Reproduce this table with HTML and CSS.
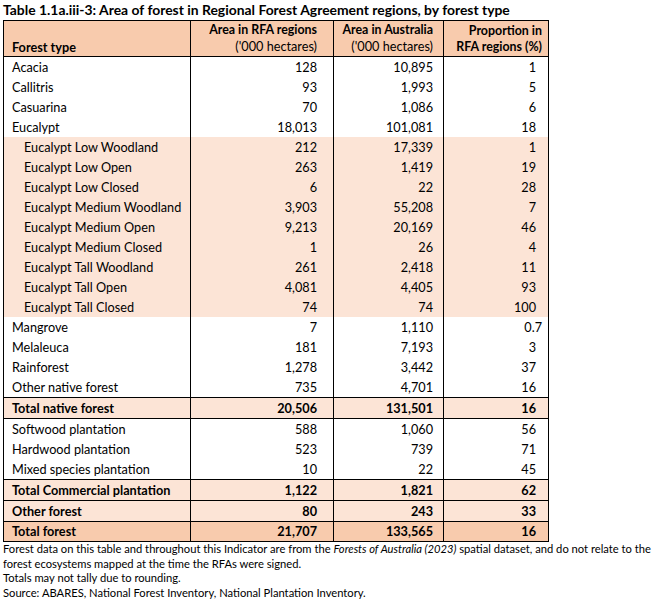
FILE: index.html
```html
<!DOCTYPE html>
<html>
<head>
<meta charset="utf-8">
<link rel="stylesheet" href="styles.css">
</head>
<body>
<div class="page">
  <div class="title">Table 1.1a.iii-3: Area of forest in Regional Forest Agreement regions, by forest type</div>
  <table class="tbl">
    <colgroup>
      <col class="c1"><col class="c2"><col class="c3"><col class="c4">
    </colgroup>
    <thead>
      <tr>
        <th class="name">Forest type</th>
        <th class="n2">Area in RFA regions<br><span class="thin">('000 hectares)</span></th>
        <th class="n3">Area in Australia<br><span class="thin">('000 hectares)</span></th>
        <th class="n4">Proportion in<br>RFA regions (%)</th>
      </tr>
    </thead>
    <tbody>
      <tr><td class="name">Acacia</td><td class="n2">128</td><td class="n3">10,895</td><td class="n4">1</td></tr>
      <tr><td class="name">Callitris</td><td class="n2">93</td><td class="n3">1,993</td><td class="n4">5</td></tr>
      <tr><td class="name">Casuarina</td><td class="n2">70</td><td class="n3">1,086</td><td class="n4">6</td></tr>
      <tr><td class="name">Eucalypt</td><td class="n2">18,013</td><td class="n3">101,081</td><td class="n4">18</td></tr>
      <tr class="sub"><td class="name">Eucalypt Low Woodland</td><td class="n2">212</td><td class="n3">17,339</td><td class="n4">1</td></tr>
      <tr class="sub"><td class="name">Eucalypt Low Open</td><td class="n2">263</td><td class="n3">1,419</td><td class="n4">19</td></tr>
      <tr class="sub"><td class="name">Eucalypt Low Closed</td><td class="n2">6</td><td class="n3">22</td><td class="n4">28</td></tr>
      <tr class="sub"><td class="name">Eucalypt Medium Woodland</td><td class="n2">3,903</td><td class="n3">55,208</td><td class="n4">7</td></tr>
      <tr class="sub"><td class="name">Eucalypt Medium Open</td><td class="n2">9,213</td><td class="n3">20,169</td><td class="n4">46</td></tr>
      <tr class="sub"><td class="name">Eucalypt Medium Closed</td><td class="n2">1</td><td class="n3">26</td><td class="n4">4</td></tr>
      <tr class="sub"><td class="name">Eucalypt Tall Woodland</td><td class="n2">261</td><td class="n3">2,418</td><td class="n4">11</td></tr>
      <tr class="sub"><td class="name">Eucalypt Tall Open</td><td class="n2">4,081</td><td class="n3">4,405</td><td class="n4">93</td></tr>
      <tr class="sub"><td class="name">Eucalypt Tall Closed</td><td class="n2">74</td><td class="n3">74</td><td class="n4">100</td></tr>
      <tr><td class="name">Mangrove</td><td class="n2">7</td><td class="n3">1,110</td><td class="n4 dec">0.7</td></tr>
      <tr><td class="name">Melaleuca</td><td class="n2">181</td><td class="n3">7,193</td><td class="n4">3</td></tr>
      <tr><td class="name">Rainforest</td><td class="n2">1,278</td><td class="n3">3,442</td><td class="n4">37</td></tr>
      <tr><td class="name">Other native forest</td><td class="n2">735</td><td class="n3">4,701</td><td class="n4">16</td></tr>
      <tr class="total"><td class="name">Total native forest</td><td class="n2">20,506</td><td class="n3">131,501</td><td class="n4">16</td></tr>
      <tr><td class="name">Softwood plantation</td><td class="n2">588</td><td class="n3">1,060</td><td class="n4">56</td></tr>
      <tr><td class="name">Hardwood plantation</td><td class="n2">523</td><td class="n3">739</td><td class="n4">71</td></tr>
      <tr><td class="name">Mixed species plantation</td><td class="n2">10</td><td class="n3">22</td><td class="n4">45</td></tr>
      <tr class="total"><td class="name">Total Commercial plantation</td><td class="n2">1,122</td><td class="n3">1,821</td><td class="n4">62</td></tr>
      <tr class="total"><td class="name">Other forest</td><td class="n2">80</td><td class="n3">243</td><td class="n4">33</td></tr>
      <tr class="total grand"><td class="name">Total forest</td><td class="n2">21,707</td><td class="n3">133,565</td><td class="n4">16</td></tr>
    </tbody>
  </table>
  <div class="notes">
    <p>Forest data on this table and throughout this Indicator are from the <em>Forests of Australia (2023)</em> spatial dataset, and do not relate to the forest ecosystems mapped at the time the RFAs were signed.</p>
    <p>Totals may not tally due to rounding.</p>
    <p>Source: ABARES, National Forest Inventory, National Plantation Inventory.</p>
  </div>
</div>
</body>
</html>
```

FILE: styles.css
```css
html, body {
  margin: 0;
  padding: 0;
  background: #ffffff;
}
body {
  font-family: Lato, "Liberation Sans", sans-serif;
  color: #000000;
}
.page {
  padding: 0 0 0 3px;
  width: 660px;
}
.title {
  font-weight: bold;
  font-size: 13.9px;
  line-height: 20px;
  height: 20px;
  white-space: nowrap;
}
.tbl {
  border-collapse: collapse;
  table-layout: fixed;
  width: 545px;
  border: 1px solid #000;
  font-size: 12.7px;
}
.c1 { width: 187px; }
.c2 { width: 143px; }
.c3 { width: 110px; }
.c4 { width: 105px; }
.tbl th, .tbl td {
  padding: 0;
  border-left: 1px solid #000;
  border-right: 1px solid #000;
  white-space: nowrap;
}
.tbl td {
  height: 20px;
  line-height: 20px;
}
.tbl thead th {
  background: #f8cbad;
  font-weight: bold;
  font-size: 12.4px;
  line-height: 16px;
  height: 36px;
  vertical-align: bottom;
  padding-bottom: 1px;
  border-bottom: 1px solid #000;
  box-sizing: border-box;
}
.tbl thead .thin { font-weight: normal; font-size: 12.7px; }
.tbl .name { text-align: left; padding-left: 8px; }
.tbl thead .name { font-size: 12.7px; }
.tbl .n2 { text-align: right; padding-right: 16px; }
.tbl .n3 { text-align: right; padding-right: 10px; }
.tbl .n4 { text-align: right; padding-right: 12px; }
.tbl .n4.dec { padding-right: 6px; }
.tbl thead .n4 { padding-right: 6px; }
.tbl .sub td { background: #fce4d6; }
.tbl .sub .name { padding-left: 20px; }
.tbl .total td {
  background: #fce4d6;
  font-weight: bold;
  height: 20px;
  line-height: 19px;
  border-top: 1px solid #000;
  border-bottom: 1px solid #000;
}
.tbl .grand td { background: #f8cbad; height: 19px; }
.notes {
  font-size: 11.2px;
  line-height: 14.7px;
  margin-top: 0;
}
.notes p { margin: 0; }
```
